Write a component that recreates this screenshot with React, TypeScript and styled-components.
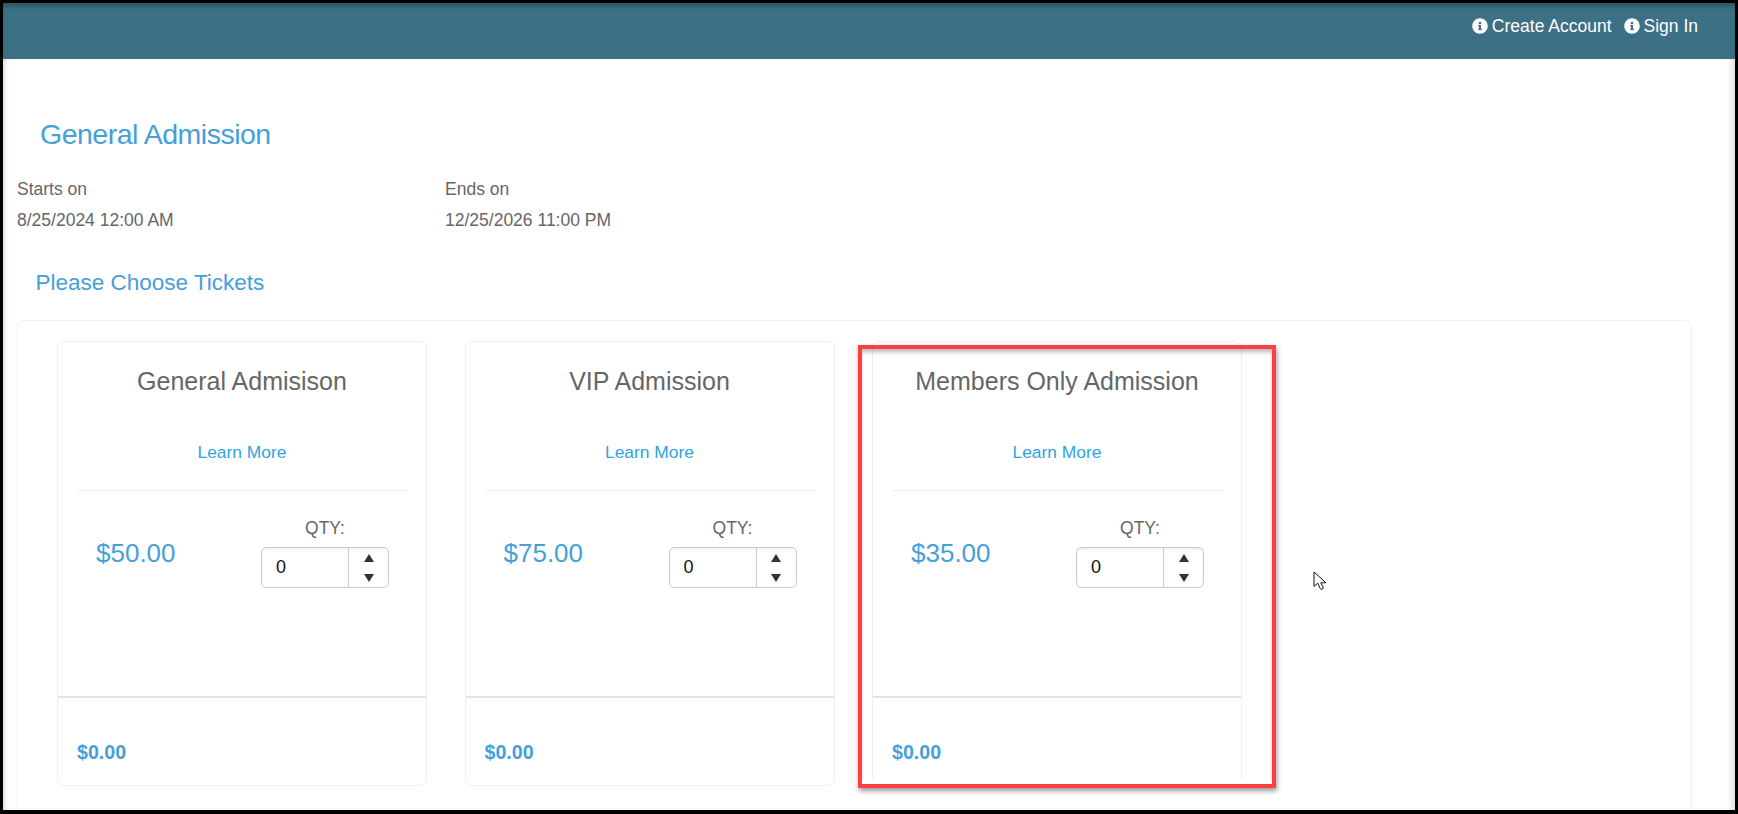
import React from "react";
import styled, { createGlobalStyle } from "styled-components";
import { FaInfoCircle } from "react-icons/fa";

const Global = createGlobalStyle`
  html, body { margin: 0; padding: 0; background: #000; }
  body { font-family: "Liberation Sans", Arial, sans-serif; }
  * { box-sizing: border-box; }
`;

const Frame = styled.div`
  position: relative;
  width: 1738px;
  height: 814px;
  padding: 3px 3px 4px 3px;
  background: #000;
  overflow: hidden;
`;

const Screen = styled.div`
  position: relative;
  height: 100%;
  background: #fff;
  overflow: hidden;
  display: flex;
  flex-direction: column;
`;

const TopBar = styled.header`
  flex: none;
  height: 56px;
  background: #3c7084;
  box-shadow: inset 0 5px 5px -2px rgba(0, 0, 0, 0.28);
  display: flex;
  justify-content: flex-end;
  align-items: center;
  gap: 12px;
  padding: 0 37px 10px 0;
`;

const NavLink = styled.a`
  display: flex;
  align-items: center;
  gap: 4px;
  color: #fff;
  font-size: 17.5px;
  line-height: 24px;
  svg { width: 16px; height: 16px; }
`;

const Main = styled.main`
  flex: 1;
  min-height: 0;
  padding: 58px 43px 0 14px;
  box-shadow: inset 5px 0 5px -3px rgba(0, 0, 0, 0.14), inset -6px 0 6px -3px rgba(0, 0, 0, 0.14);
`;

const Heading = styled.h1`
  margin: 0 0 22.5px 23px;
  font-size: 28.5px;
  font-weight: 400;
  letter-spacing: -0.5px;
  line-height: 34px;
  color: #459fda;
`;

const DateRow = styled.div`
  display: flex;
`;

const DateCol = styled.div`
  width: 428px;
  font-size: 17.5px;
  line-height: 31px;
  color: #666;
`;

const SubHeading = styled.h2`
  margin: 34px 0 24px 18.5px;
  font-size: 22.5px;
  font-weight: 400;
  line-height: 26px;
  color: #459fda;
`;

const Panel = styled.section`
  height: 600px;
  border: 1px solid #f1f1f1;
  border-radius: 7px;
  padding: 20px 0 0 39px;
  display: grid;
  grid-template-columns: repeat(3, 370px);
  column-gap: 37.5px;
  align-items: start;
`;

const Card = styled.article`
  height: 445px;
  border: 1px solid #efefef;
  border-radius: 7px;
  display: flex;
  flex-direction: column;
`;

const CardTitle = styled.h3`
  margin: 24px 0 0;
  font-size: 25px;
  font-weight: 400;
  line-height: 30px;
  text-align: center;
  color: #666;
`;

const LearnMore = styled.a`
  display: block;
  margin-top: 44px;
  font-size: 17.4px;
  line-height: 24px;
  text-align: center;
  color: #2fa4e2;
`;

const CardBody = styled.div`
  margin: 26px 19px 0;
  padding: 26px 0 0 19px;
  border-top: 1px solid #eee;
  display: flex;
  justify-content: space-between;
`;

const Price = styled.div`
  padding-top: 21px;
  font-size: 26px;
  line-height: 30px;
  color: #459fda;
`;

const QtyCol = styled.div`
  width: 128px;
  margin-right: 18px;
  display: flex;
  flex-direction: column;
  align-items: center;
`;

const QtyLabel = styled.label`
  font-size: 17.5px;
  line-height: 22px;
  color: #666;
  margin-bottom: 8px;
`;

const Spinner = styled.div`
  width: 128px;
  height: 41px;
  border: 1px solid #ccc;
  border-radius: 5px;
  display: flex;
  box-shadow: inset 0 1px 2px rgba(0, 0, 0, 0.08);
`;

const QtyInput = styled.input`
  flex: 1;
  min-width: 0;
  border: 0;
  border-right: 1px solid #ccc;
  background: transparent;
  outline: none;
  padding: 0 0 0 14px;
  font-family: "Liberation Sans", Arial, sans-serif;
  font-size: 18px;
  color: #111;
`;

const Arrows = styled.div`
  width: 39px;
  flex: none;
  display: flex;
  flex-direction: column;
  align-items: center;
  justify-content: space-between;
  padding: 6px 0 5px;
  svg { display: block; }
`;

const CardFooter = styled.div`
  margin-top: auto;
  height: 89px;
  border-top: 2px solid #e3e3e3;
  padding: 41px 0 0 19px;
  font-size: 19.6px;
  font-weight: 700;
  line-height: 26px;
  color: #459fda;
`;

const Highlight = styled.div`
  position: absolute;
  left: 855px;
  top: 342px;
  width: 418px;
  height: 443px;
  border: 4px solid #fb4040;
  box-shadow: 1px 3px 5px rgba(0, 0, 0, 0.4), inset 0 4px 4px -1px rgba(0, 0, 0, 0.28);
  pointer-events: none;
  &::after {
    content: "";
    position: absolute;
    left: 0;
    right: 0;
    bottom: 0;
    height: 5px;
    background: #fff;
  }
`;

const Cursor = styled.svg`
  position: absolute;
  left: 1310px;
  top: 568px;
`;

const tickets = [
  { name: "General Admisison", price: "$50.00" },
  { name: "VIP Admission", price: "$75.00" },
  { name: "Members Only Admission", price: "$35.00" },
];

const App: React.FC = () => (
  <Frame>
    <Global />
    <Screen>
      <TopBar>
        <NavLink><FaInfoCircle />Create Account</NavLink>
        <NavLink><FaInfoCircle />Sign In</NavLink>
      </TopBar>
      <Main>
        <Heading>General Admission</Heading>
        <DateRow>
          <DateCol>Starts on<br />8/25/2024 12:00 AM</DateCol>
          <DateCol>Ends on<br />12/25/2026 11:00 PM</DateCol>
        </DateRow>
        <SubHeading>Please Choose Tickets</SubHeading>
        <Panel>
          {tickets.map((t) => (
            <Card key={t.name}>
              <CardTitle>{t.name}</CardTitle>
              <LearnMore>Learn More</LearnMore>
              <CardBody>
                <Price>{t.price}</Price>
                <QtyCol>
                  <QtyLabel>QTY:</QtyLabel>
                  <Spinner>
                    <QtyInput value="0" readOnly />
                    <Arrows>
                      <svg width="10" height="8" viewBox="0 0 10 8"><path d="M5 0 L10 8 H0 Z" fill="#333" /></svg>
                      <svg width="10" height="8" viewBox="0 0 10 8"><path d="M0 0 H10 L5 8 Z" fill="#333" /></svg>
                    </Arrows>
                  </Spinner>
                </QtyCol>
              </CardBody>
              <CardFooter>$0.00</CardFooter>
            </Card>
          ))}
        </Panel>
      </Main>
      <Highlight />
      <Cursor width="15" height="21" viewBox="0 0 15 21">
        <path d="M1 1 V15.5 L4.8 12.2 L7.2 17.6 Q8 19 9.6 18 Q10.6 17.2 10 16 L7.8 11.8 H13 Z" fill="#fff" stroke="#111" strokeWidth="1" strokeLinejoin="round" />
      </Cursor>
    </Screen>
  </Frame>
);

export default App;
